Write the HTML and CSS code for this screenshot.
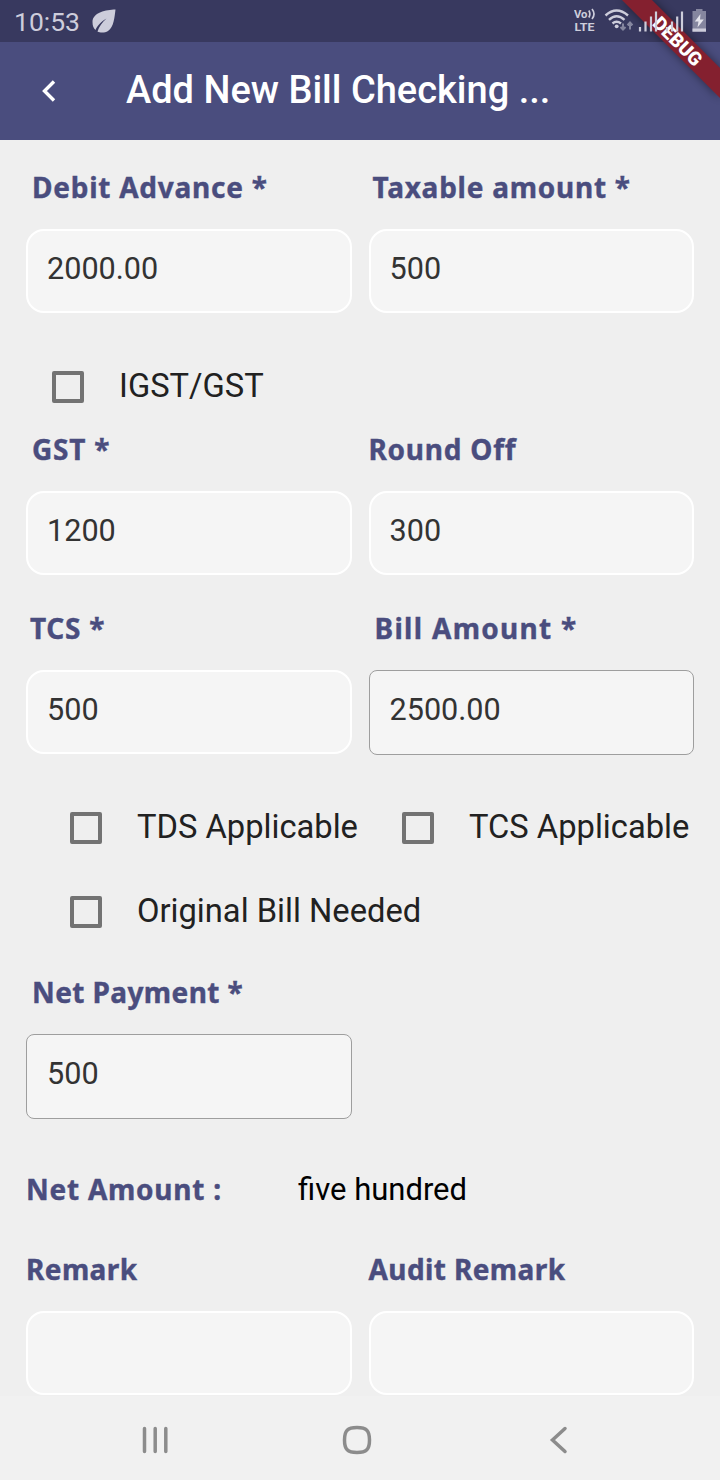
FILE: index.html
```
<!DOCTYPE html>
<html lang="en">
<head>
  <meta charset="UTF-8" />
  <meta name="viewport" content="width=device-width, initial-scale=1.0"/>
  <title>Add New Bill Checking</title>
  <link rel="stylesheet" href="styles.css">
</head>
<body>
  <div class="status-bar">
    <span class="clock">10:53</span>
    <svg class="leaf" width="24" height="24" viewBox="0 0 24 24">
      <path d="M23.5 0.5C14 1 1 3 0.5 13C0.5 17 1.5 19 3.5 21C5 17 9 12.5 14.5 9.5C10 13.5 7 17.5 5.5 22.5C8 24 13 24 16 22C22 18 22.5 8 23.5 0.5Z" fill="#cdcddb"/>
    </svg>
    <svg class="signals" width="136" height="26" viewBox="0 0 136 26">
      <g fill="#cdcddb" font-family="Roboto, sans-serif" font-weight="700">
        <text x="0" y="10" font-size="11" textLength="13.5" lengthAdjust="spacingAndGlyphs">Vo</text>
        <text x="0.5" y="23" font-size="11.5" textLength="20" lengthAdjust="spacingAndGlyphs">LTE</text>
      </g>
      <path d="M14.8 2.5Q17 6 14.8 9.5M18 1Q22 6 18 11" fill="none" stroke="#cdcddb" stroke-width="1.7"/>
      <g fill="none" stroke="#cdcddb" stroke-width="2.4">
        <path d="M31.5 7.5Q42.5 -2.5 54 7.5M35 11.8Q42.5 4.5 50.5 11.8M38.5 15.5Q42.5 12 47 15.5"/>
      </g>
      <circle cx="42.7" cy="18.3" r="1.9" fill="#cdcddb"/>
      <path d="M49 15.5V21.5M46.5 19L49 21.5L51.5 19M56 21.5V15M53.5 17.2L56 14.5L58.5 17.2" fill="none" stroke="#85869f" stroke-width="2"/>
      <path d="M66 19V23.5M71.5 13.5V23.5M77 8.5V23.5M82 3.5V23.5M93 19V23.5M98 13.5V23.5M103.2 8.5V23.5M108 3.5V23.5" stroke="#cdcddb" stroke-width="2.2" fill="none"/>
      <path d="M122 3V1H128.5V3H132V24H118.5V3Z" fill="#85869f"/>
      <path d="M118.5 20.5H132V23.5H118.5Z" fill="#cdcddb"/>
      <path d="M126.5 6L120.8 13.5H124.5L123.5 19.5L129.8 11.5H126Z" fill="#e4e4ec"/>
    </svg>
  </div>

  <header class="app-bar">
    <svg class="back" width="16" height="24" viewBox="0 0 16 24">
      <path d="M14 2.5L4.5 12L14 21.5" fill="none" stroke="#fff" stroke-width="3.4"/>
    </svg>
    <h1>Add New Bill Checking ...</h1>
  </header>

  <svg class="debug-banner" width="120" height="120" viewBox="0 0 120 120">
    <defs>
      <filter id="soft" x="-20%" y="-20%" width="140%" height="140%"><feGaussianBlur stdDeviation="5"/></filter>
    </defs>
    <path d="M22 0H52L120 68V98Z" fill="#000" opacity="0.45" filter="url(#soft)"/>
    <path d="M22 0H52L120 68V98Z" fill="#84202f"/>
    <text transform="translate(78 41) rotate(45)" text-anchor="middle" y="7">DEBUG</text>
  </svg>

  <main class="form">
    <div class="row">
      <div class="field"><label class="indent">Debit Advance *</label><div class="input">2000.00</div></div>
      <div class="field"><label class="indent-sm">Taxable amount *</label><div class="input">500</div></div>
    </div>

    <div class="checks first">
      <div class="check"><span class="box"></span><span>IGST/GST</span></div>
    </div>

    <div class="row">
      <div class="field"><label class="indent">GST *</label><div class="input">1200</div></div>
      <div class="field"><label>Round Off</label><div class="input">300</div></div>
    </div>

    <div class="row spaced">
      <div class="field"><label class="indent-sm">TCS *</label><div class="input">500</div></div>
      <div class="field"><label class="indent wide">Bill Amount *</label><div class="input outlined">2500.00</div></div>
    </div>

    <div class="checks">
      <div class="check"><span class="box"></span><span>TDS Applicable</span></div>
      <div class="check"><span class="box"></span><span>TCS Applicable</span></div>
    </div>
    <div class="checks last">
      <div class="check"><span class="box"></span><span>Original Bill Needed</span></div>
    </div>

    <div class="row">
      <div class="field"><label class="indent tight">Net Payment *</label><div class="input outlined">500</div></div>
    </div>

    <div class="net-amount">
      <label>Net Amount :</label>
      <span>five hundred</span>
    </div>

    <div class="row">
      <div class="field"><label class="tight">Remark</label><div class="input"></div></div>
      <div class="field"><label class="tight">Audit Remark</label><div class="input"></div></div>
    </div>
  </main>

  <nav class="nav-bar">
    <svg width="28" height="28" viewBox="0 0 28 28">
      <path d="M3.5 2.5V25.5M14.2 2.5V25.5M24.8 2.5V25.5"/>
    </svg>
    <svg class="home" width="30" height="30" viewBox="0 0 30 30">
      <path d="M15 2.5C24.5 2.5 27.5 5.5 27.5 15S24.5 27.5 15 27.5S2.5 24.5 2.5 15S5.5 2.5 15 2.5Z"/>
    </svg>
    <svg width="20" height="28" viewBox="0 0 20 28">
      <path d="M16 2.5L3.5 14L16 25.5"/>
    </svg>
  </nav>
</body>
</html>
```

FILE: styles.css
```
* {
  box-sizing: border-box;
}

body {
  font-family: Roboto, sans-serif;
  margin: 0;
  width: 720px;
  height: 1480px;
  background-color: #efefef;
  color: #212121;
  display: flex;
  flex-direction: column;
  overflow: hidden;
}

.status-bar {
  height: 42px;
  flex: none;
  background: #38395f;
  display: flex;
  align-items: center;
  padding: 0 10px 0 14px;
}

.clock {
  font-size: 26.5px;
  color: #cdcddb;
}

.leaf {
  margin-left: 12px;
}

.signals {
  margin-left: auto;
  position: relative;
  z-index: 2;
}

.app-bar {
  height: 98px;
  flex: none;
  background: #4a4d7e;
  display: flex;
  align-items: center;
  padding-left: 40px;
}

.app-bar h1 {
  margin: 0 0 3px 70px;
  font-size: 38px;
  font-weight: 500;
  color: #fff;
  white-space: nowrap;
}

.debug-banner {
  position: absolute;
  top: 0;
  right: 0;
  z-index: 1;
}

.debug-banner text {
  font-size: 19px;
  font-weight: 900;
  fill: #fff;
}

.form {
  height: 1256px;
  padding: 28px 26px 0;
}

.row {
  display: grid;
  grid-template-columns: 325.5px 325.5px;
  gap: 17px;
}

.row.spaced {
  margin-top: 34px;
}

label {
  display: block;
  height: 40px;
  line-height: 38px;
  font-family: "Noto Sans", sans-serif;
  font-size: 28px;
  font-weight: 700;
  letter-spacing: 0.75px;
  -webkit-text-stroke: 0.4px #4a4d7e;
  color: #4a4d7e;
  white-space: nowrap;
}

label.indent {
  padding-left: 6px;
}

label.indent-sm {
  padding-left: 4px;
}

label.wide {
  letter-spacing: 1.3px;
}

label.tight {
  letter-spacing: 0.4px;
}

.input {
  height: 84px;
  margin-top: 21px;
  padding: 0 19px;
  border: 2px solid #fff;
  border-radius: 18px;
  background: #f5f5f5;
  color: #333;
  font-size: 30.6px;
  line-height: 75px;
}

.input.outlined {
  height: 85px;
  border: 1px solid #9e9e9e;
  border-radius: 8px;
  padding: 0 20px;
  line-height: 77px;
}

.checks {
  display: flex;
  height: 84px;
  align-items: center;
  padding-left: 44px;
}

.row + .checks {
  margin-top: 31px;
}

.row + .checks.first {
  padding-left: 26px;
  margin-top: 32px;
  margin-bottom: 1px;
}

.checks.last {
  margin-bottom: 19px;
}

.check {
  display: flex;
  align-items: center;
  font-size: 32.7px;
  gap: 35px;
  width: 332px;
  flex: none;
  white-space: nowrap;
}

.check span + span {
  padding-bottom: 3px;
}

.box {
  width: 32px;
  height: 32px;
  flex: none;
  border: 4px solid #737373;
  border-radius: 2px;
}

.net-amount {
  display: flex;
  height: 40px;
  margin: 51px 0 40px;
  font-size: 31px;
  line-height: 40px;
  color: #000;
}

.net-amount label {
  width: 272px;
}

.nav-bar {
  height: 84px;
  background: #f1f1f1;
  display: flex;
  align-items: center;
  justify-content: space-between;
  padding: 4px 151px 0 141px;
}

.nav-bar path {
  fill: none;
  stroke: #8c8c8c;
  stroke-width: 3.5;
  stroke-linecap: round;
}

.home {
  margin-right: 5px;
}
```
